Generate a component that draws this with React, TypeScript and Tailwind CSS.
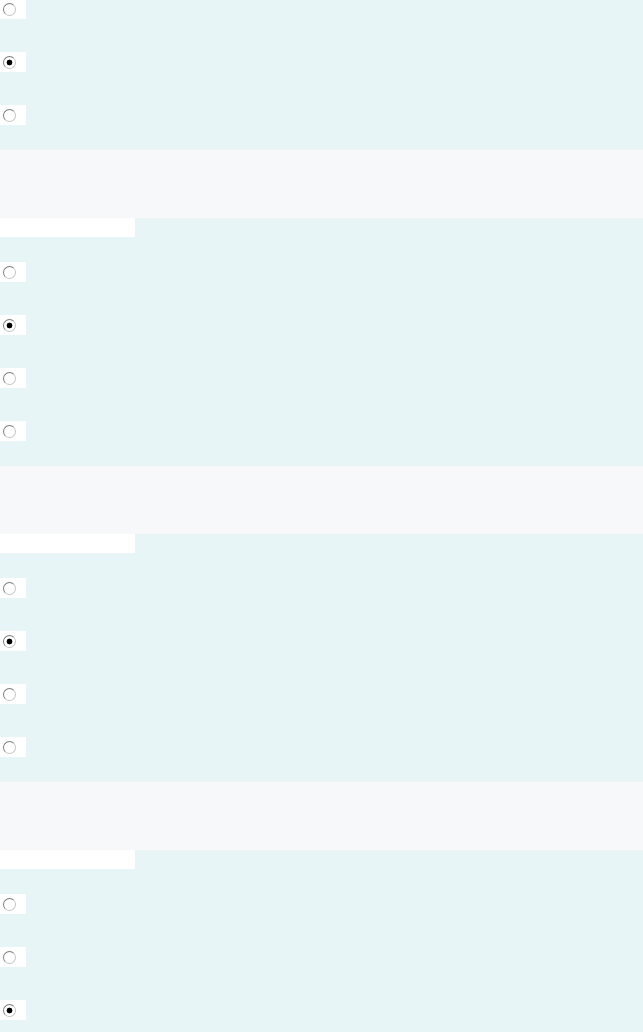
import React from "react";

const groups = [
  { name: "q1", count: 3, checked: 1, header: false },
  { name: "q2", count: 4, checked: 1, header: true },
  { name: "q3", count: 4, checked: 1, header: true },
  { name: "q4", count: 3, checked: 2, header: true },
];

function RadioBox({ name, checked }: { name: string; checked: boolean }) {
  return (
    <label className="flex h-[20px] w-[26px] items-start bg-white pl-[3px] pt-[4px]">
      <input
        type="radio"
        name={name}
        defaultChecked={checked}
        className="m-0 h-[13px] w-[13px] appearance-none rounded-full border border-[#7d7d7d] border-r-[#c4c4c4] border-b-[#c4c4c4] bg-white checked:bg-[radial-gradient(circle,#000_0_2.6px,transparent_3.2px)]"
      />
    </label>
  );
}

export default function App() {
  return (
    <div className="min-h-screen w-full overflow-hidden bg-[#e7f5f7] font-['Liberation_Sans',sans-serif]">
      {groups.map((g, gi) => (
        <div key={g.name}>
          {g.header && (
            <>
              {/* question header */}
              <div className="h-[68px] w-full bg-[#f6f8fa]" />
              <div className="h-[19px] w-[135px] bg-white" />
            </>
          )}
          <div
            className={`flex flex-col gap-[33px] ${
              gi === 0 ? "-mt-px pb-[25px]" : "py-[25px]"
            }`}
          >
            {Array.from({ length: g.count }).map((_, i) => (
              <RadioBox key={i} name={g.name} checked={i === g.checked} />
            ))}
          </div>
        </div>
      ))}
    </div>
  );
}
